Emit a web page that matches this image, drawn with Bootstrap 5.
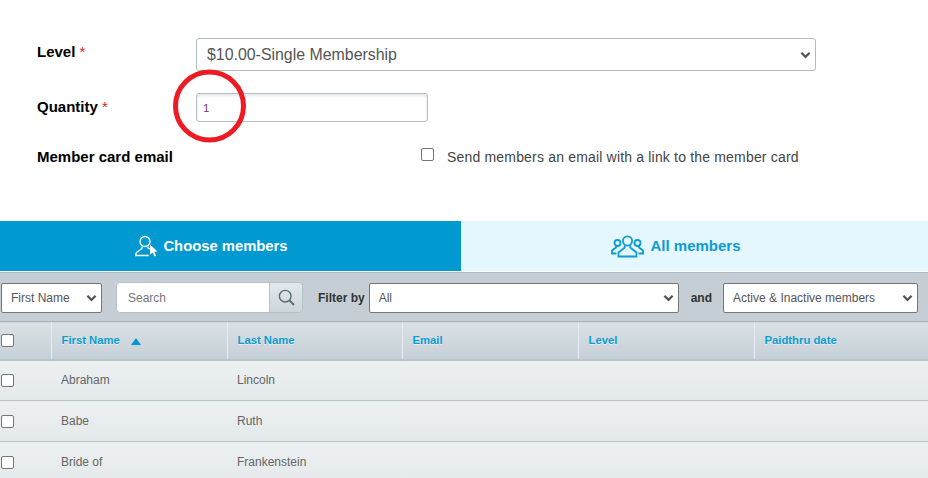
<!DOCTYPE html>
<html lang="en">
<head>
  <meta charset="UTF-8" />
  <title>Choose members</title>
  <link href="https://cdn.jsdelivr.net/npm/bootstrap@5.3.0/dist/css/bootstrap.min.css" rel="stylesheet" />
  <style>
    body { font-family: "Liberation Sans", Arial, sans-serif; background: #fff; overflow: hidden; height: 478px; }
    .sheet { position: relative; width: 928px; }
    .member-form { padding: 38px 0 0 37px; height: 221px; }
    .field-row { display: flex; }
    .field-label { width: 159px; font-size: 15px; font-weight: 700; color: #000; line-height: 16px; }
    .field-label span { color: #e0202c; font-weight: 400; }
    .level-row { height: 55px; }
    .level-row .field-label { padding-top: 6px; }
    .qty-row { height: 52px; }
    .qty-row .field-label { padding-top: 6px; }
    .mail-row .field-label { padding-top: 4px; width: 384px; }
    .form-select { background-image: url("data:image/svg+xml,%3csvg xmlns='http://www.w3.org/2000/svg' viewBox='0 0 12 8'%3e%3cpath fill='none' stroke='%23555' stroke-width='2.4' d='M1.500 1.500 6 6l4.500-4.500'/%3e%3c/svg%3e"); }
    .level-select.form-select { width: 620px; height: 33px; padding: 0 30px 0 10px; font-size: 15.900px; color: #555; border: 1px solid #aebcc4; border-radius: 3px; background-position: right 4px center; background-size: 11px 8px; }
    .qty-input.form-control { width: 232px; height: 29px; padding: 0 6px; font-size: 11.500px; color: #7f3a58; border: 1px solid #b4c0c7; border-radius: 3px; box-shadow: inset 0 2px 3px rgba(0,0,0,.1); }
    .mail-check { font-size: 14px; color: #444; line-height: 16px; letter-spacing: .18px; padding-top: 4px; display: flex; gap: 13px; }
    .tick.form-check-input { width: 13px; height: 13px; margin: 0; border: 1px solid #767676; border-radius: 2px; flex: none; }
    .mail-check .tick { margin-top: -1px; }
    .tab-row { display: flex; height: 50px; }
    .tab-item { display: flex; align-items: center; justify-content: center; font-weight: 700; padding-top: 1px; }
    .tab-on { width: 461px; background: #0099d1; color: #fff; padding-right: 38px; gap: 4px; font-size: 14.800px; }
    .tab-off { width: 467px; background: #e4f6fe; color: #0d9ccf; padding-right: 37px; gap: 6px; font-size: 15px; }
    .filter-bar { display: flex; align-items: center; height: 49px; margin-top: 1px; background: #c4ced4; border-top: 1px solid #b2bdc3; padding: 1px 0 0 1px; font-size: 12px; }
    .filter-bar .form-select { height: 30px; padding: 0 22px 0 9px; font-size: 12px; color: #555; border: 1px solid #767676; border-radius: 2px; background-position: right 4px center; background-size: 11px 8px; }
    .pick-name.form-select { width: 101px; }
    .search-box { display: flex; width: 187px; height: 31px; margin-left: 14px; border: 1px solid #b4c1c7; border-radius: 5px; overflow: hidden; background: #fff; }
    .search-box input { flex: 1; min-width: 0; border: 0; outline: 0; padding: 0 11px; font-size: 12px; color: #666; }
    .search-box input::placeholder { color: #777; opacity: 1; }
    .search-btn { width: 33px; display: flex; align-items: center; justify-content: center; background: linear-gradient(#e3e9ec, #ccd6da); border-left: 1px solid #b4c1c7; }
    .filter-word { font-weight: 700; color: #333; line-height: 1; }
    .by-word { margin-left: 15px; margin-right: 4px; }
    .and-word { margin: 0 11px 0 12px; }
    .pick-filter.form-select { width: 310px; }
    .pick-state.form-select { width: 195px; }
    .people { width: 928px; table-layout: fixed; border-collapse: collapse; font-size: 11.300px; }
    .people th { height: 38px; padding: 0 0 0 10px; font-weight: 700; color: #0d9ccf; background: linear-gradient(#dae1e5, #c5d0d6); border-top: 1px solid #a5b1b7; border-bottom: 2px solid #b9c4ca; border-left: 1px solid #e6ecef; text-shadow: 0 1px 0 rgba(255,255,255,.5); }
    .people td { height: 41px; padding: 0 0 0 10px; font-size: 12px; color: #666; background: linear-gradient(#ecf0f1, #e3e8ea); border-bottom: 1px solid #b9c4ca; }
    .people th:first-child, .people td:first-child { padding: 0 0 0 1px; border-left: 0; }
    .people .tick { display: block; }
    .sort-arrow { display: inline-block; margin-left: 8px; width: 0; height: 0; border-left: 5.500px solid transparent; border-right: 5.500px solid transparent; border-bottom: 7px solid #0099d1; vertical-align: -1px; }
    .red-circle { position: absolute; left: 172px; top: 69px; width: 76px; height: 76px; pointer-events: none; }
  </style>
</head>
<body>
  <div class="sheet">
    <form class="member-form">
      <div class="field-row level-row">
        <label class="field-label">Level <span>*</span></label>
        <select class="form-select level-select"><option>$10.00-Single Membership</option></select>
      </div>
      <div class="field-row qty-row">
        <label class="field-label">Quantity <span>*</span></label>
        <input type="text" class="form-control qty-input" value="1" />
      </div>
      <div class="field-row mail-row">
        <label class="field-label">Member card email</label>
        <label class="mail-check"><input type="checkbox" class="form-check-input tick" /> Send members an email with a link to the member card</label>
      </div>
    </form>

    <div class="tab-row">
      <div class="tab-item tab-on">
        <svg width="24" height="24" viewBox="0 0 24 24" fill="none" stroke="#fff" stroke-width="1.300">
          <circle cx="10" cy="6.500" r="5" />
          <path d="M7 11.500v2L1.500 17.500c-.8.8-.8 2-.8 3h13M13 11.500v1.500l2 1" />
          <path d="M15 9.500l7.500 7-3.300.3 2 4-1.600.8-1.900-4-2.700 2.200z" fill="#fff" stroke="none" />
        </svg>
        Choose members
      </div>
      <div class="tab-item tab-off">
        <svg width="33" height="23" viewBox="0 0 33 23" fill="none" stroke="#0d9ccf" stroke-width="1.800">
          <circle cx="16.500" cy="6" r="4.600" />
          <path d="M13.700 10.500v2L7.500 17.500v4h18v-4l-6.200-5v-2" />
          <circle cx="6.500" cy="8" r="3" />
          <path d="M5 11v1.500L1 15.500v3h4.500" />
          <circle cx="26.500" cy="8" r="3" />
          <path d="M28 11v1.500l4 3v3h-4.500" />
        </svg>
        All members
      </div>
    </div>

    <div class="filter-bar">
      <select class="form-select pick-name"><option>First Name</option></select>
      <div class="search-box">
        <input type="text" placeholder="Search" />
        <span class="search-btn">
          <svg width="17" height="17" viewBox="0 0 17 17" fill="none" stroke="#5f6b70" stroke-width="1.400">
            <circle cx="7.200" cy="7.200" r="5.800" />
            <path d="M11.500 11.500l4.500 4.500" stroke-width="2" />
          </svg>
        </span>
      </div>
      <span class="filter-word by-word">Filter by</span>
      <select class="form-select pick-filter"><option>All</option></select>
      <span class="filter-word and-word">and</span>
      <select class="form-select pick-state"><option>Active &amp; Inactive members</option></select>
    </div>

    <table class="people">
      <colgroup>
        <col style="width:51px" /><col style="width:176px" /><col style="width:175px" />
        <col style="width:176px" /><col style="width:176px" /><col style="width:174px" />
      </colgroup>
      <thead>
        <tr>
          <th><input type="checkbox" class="form-check-input tick" /></th>
          <th>First Name <span class="sort-arrow"></span></th>
          <th>Last Name</th>
          <th>Email</th>
          <th>Level</th>
          <th>Paidthru date</th>
        </tr>
      </thead>
      <tbody id="rows"></tbody>
    </table>

    <svg class="red-circle" viewBox="0 0 76 76" fill="none">
      <ellipse cx="37.500" cy="37" rx="34" ry="34" stroke="#ed1c24" stroke-width="5" />
    </svg>
  </div>

  <script>
    var members = [['Abraham', 'Lincoln'], ['Babe', 'Ruth'], ['Bride of', 'Frankenstein']];
    document.getElementById('rows').innerHTML = members.map(function (m) {
      return '<tr><td><input type="checkbox" class="form-check-input tick" /></td>' +
        '<td>' + m[0] + '</td><td>' + m[1] + '</td><td></td><td></td><td></td></tr>';
    }).join('');
  </script>
  <script src="https://cdn.jsdelivr.net/npm/bootstrap@5.3.0/dist/js/bootstrap.bundle.min.js"></script>
</body>
</html>
